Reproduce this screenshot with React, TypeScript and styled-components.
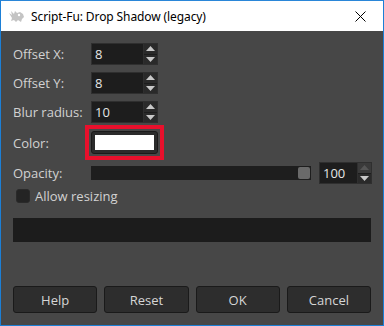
import React from "react";
import styled, { createGlobalStyle } from "styled-components";

const Global = createGlobalStyle`
  html, body { margin: 0; padding: 0; background: #ffffff; }
  body { font-family: "Open Sans", "Noto Sans", sans-serif; }
`;

const Window = styled.div`
  width: 384px;
  height: 326px;
  box-sizing: border-box;
  border: 1px solid #1c7fd6;
  border-top-color: #2a86d8;
  display: flex;
  flex-direction: column;
  background: #474747;
  overflow: hidden;
`;

const TitleBar = styled.div`
  height: 30px;
  flex: none;
  background: #ffffff;
  display: flex;
  align-items: center;
  padding: 0 0 0 7px;
  font-family: "Noto Sans", "Open Sans", sans-serif;
  font-size: 12px;
  color: #000000;
`;

const TitleText = styled.span`
  margin-left: 6px;
  flex: 1;
  letter-spacing: -0.1px;
`;

const CloseBtn = styled.div`
  width: 46px;
  height: 30px;
  display: flex;
  align-items: center;
  justify-content: center;
`;

const Body = styled.div`
  flex: 1;
  display: flex;
  flex-direction: column;
  padding: 12px;
  color: #d2d2d2;
  font-size: 13px;
`;

const Form = styled.div`
  display: grid;
  grid-template-columns: 78px 1fr;
  row-gap: 7px;
  align-items: center;
`;

const Label = styled.div`
  line-height: 22px;
`;

const Spin = styled.div<{ w: number }>`
  display: flex;
  width: ${(p) => p.w}px;
  height: 22px;
  box-sizing: border-box;
  border: 1px solid #2f2f2f;
  background: #1d1d1d;
`;

const SpinText = styled.div`
  flex: 1;
  padding-left: 3px;
  line-height: 20px;
  color: #e6e6e6;
  font-size: 13px;
`;

const SpinArrows = styled.div`
  width: 13px;
  display: flex;
  flex-direction: column;
  border-left: 1px solid #2f2f2f;
`;

const Arrow = styled.div<{ dim?: boolean }>`
  flex: 1;
  display: flex;
  align-items: center;
  justify-content: center;
  background: ${(p) => (p.dim ? "#3a3a3a" : "#2a2a2a")};
  & + & {
    border-top: 1px solid #1d1d1d;
  }
`;

/* the red frame is an annotation drawn over the dialog, so it takes no room */
const ColorBtn = styled.div`
  position: relative;
  width: 67px;
  height: 23px;
  margin: 1px 0;
  box-sizing: border-box;
  border: 1px solid #1a1a1a;
  border-radius: 3px;
  background: #2b2b2b;
  padding: 3px;
  display: flex;
  &::after {
    content: "";
    position: absolute;
    inset: -7px;
    border: 4px solid #e8102c;
  }
`;

const Swatch = styled.div`
  flex: 1;
  background: #ffffff;
`;

const OpacityRow = styled.div`
  display: flex;
  align-items: center;
  gap: 8px;
`;

const Slider = styled.div`
  width: 220px;
  height: 14px;
  background: #1e1e1e;
  display: flex;
  justify-content: flex-end;
  align-items: center;
  padding-right: 1px;
  box-sizing: border-box;
`;

const Thumb = styled.div`
  width: 12px;
  height: 12px;
  border-radius: 2px;
  background: #6a6a6a;
`;

const CheckRow = styled.label`
  display: flex;
  align-items: center;
  gap: 5px;
  margin-top: 3px;
  margin-left: 3px;
`;

const Box = styled.span`
  width: 12px;
  height: 12px;
  border-radius: 3px;
  border: 1px solid #2a2a2a;
  background: #242424;
`;

const Progress = styled.div`
  height: 24px;
  margin-top: 13px;
  background: #1c1c1c;
`;

const Buttons = styled.div`
  margin-top: auto;
  display: grid;
  grid-template-columns: repeat(4, 1fr);
  gap: 7px;
`;

const Button = styled.div`
  height: 27px;
  box-sizing: border-box;
  border: 1px solid #1a1a1a;
  border-radius: 3px;
  background: #2d2d2d;
  display: flex;
  align-items: center;
  justify-content: center;
  color: #d6d6d6;
`;

const Up = ({ dim }: { dim?: boolean }) => (
  <svg width="9" height="5" viewBox="0 0 9 5">
    <path d="M0 5 L4.5 0 L9 5 Z" fill={dim ? "#555" : "#c8c8c8"} />
  </svg>
);
const Down = () => (
  <svg width="9" height="5" viewBox="0 0 9 5">
    <path d="M0 0 L4.5 5 L9 0 Z" fill="#c8c8c8" />
  </svg>
);

function SpinBox({ value, w, dimUp }: { value: string; w: number; dimUp?: boolean }) {
  return (
    <Spin w={w}>
      <SpinText>{value}</SpinText>
      <SpinArrows>
        <Arrow dim={dimUp}>
          <Up dim={dimUp} />
        </Arrow>
        <Arrow>
          <Down />
        </Arrow>
      </SpinArrows>
    </Spin>
  );
}

const Wilber = () => (
  <svg width="17" height="13" viewBox="0 0 17 13">
    <path
      d="M1 3 L4 5 L3 1 L6 4 L7 1 L9 3 L12 2 L15 4 L16 7 L14 9 L13 12 L10 10 L8 12 L6 10 L3 11 L4 8 Z"
      fill="#c4c4c4"
    />
    <circle cx="11" cy="5" r="1.2" fill="#ffffff" />
  </svg>
);

export default function App() {
  return (
    <>
      <Global />
      <Window>
        <TitleBar>
          <Wilber />
          <TitleText>Script-Fu: Drop Shadow (legacy)</TitleText>
          <CloseBtn>
            <svg width="11" height="11" viewBox="0 0 11 11">
              <path d="M0.5 0.5 L10.5 10.5 M10.5 0.5 L0.5 10.5" stroke="#000" strokeWidth="1" />
            </svg>
          </CloseBtn>
        </TitleBar>
        <Body>
          <Form>
            <Label>Offset X:</Label>
            <SpinBox value="8" w={67} />
            <Label>Offset Y:</Label>
            <SpinBox value="8" w={67} />
            <Label>Blur radius:</Label>
            <SpinBox value="10" w={67} />
            <Label>Color:</Label>
            <ColorBtn>
              <Swatch />
            </ColorBtn>
            <Label>Opacity:</Label>
            <OpacityRow>
              <Slider>
                <Thumb />
              </Slider>
              <SpinBox value="100" w={53} dimUp />
            </OpacityRow>
          </Form>
          <CheckRow>
            <Box />
            Allow resizing
          </CheckRow>
          <Progress />
          <Buttons>
            <Button>Help</Button>
            <Button>Reset</Button>
            <Button>OK</Button>
            <Button>Cancel</Button>
          </Buttons>
        </Body>
      </Window>
    </>
  );
}
